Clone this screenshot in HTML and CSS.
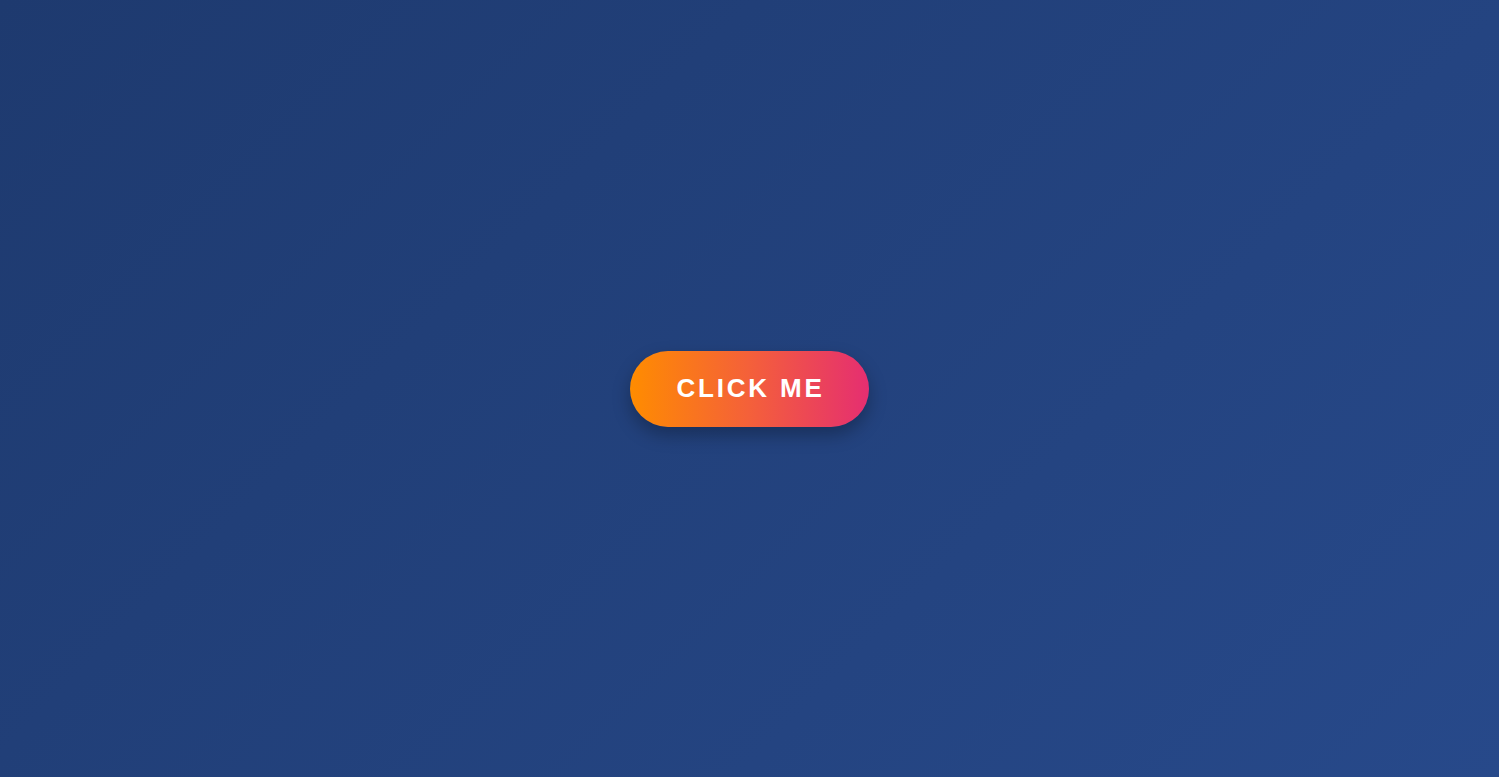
FILE: index.html
```html
<!DOCTYPE html>
<html lang="en">
<head>
<meta charset="utf-8">
<title>Click Me</title>
<link rel="stylesheet" href="styles.css">
</head>
<body>
<main class="stage">
  <button class="cta" type="button">Click Me</button>
</main>
</body>
</html>
```

FILE: styles.css
```css
html, body {
  margin: 0;
  height: 100%;
}
body {
  background: linear-gradient(135deg, #1e3a6f 0%, #27498a 100%);
  font-family: "Liberation Sans", Arial, sans-serif;
}
.stage {
  height: 100vh;
  display: flex;
  align-items: center;
  justify-content: center;
}
.cta {
  height: 76px;
  padding: 0 44px 0 46px;
  border: none;
  border-radius: 38px;
  background: linear-gradient(90deg, #ff8c00 0%, #f4603a 50%, #e52e71 100%);
  color: #fff;
  font-family: "Liberation Sans", Arial, sans-serif;
  font-size: 26px;
  font-weight: bold;
  letter-spacing: 2.8px;
  text-transform: uppercase;
  box-shadow: 0 8px 18px rgba(0, 0, 0, 0.28);
  cursor: pointer;
}
```
